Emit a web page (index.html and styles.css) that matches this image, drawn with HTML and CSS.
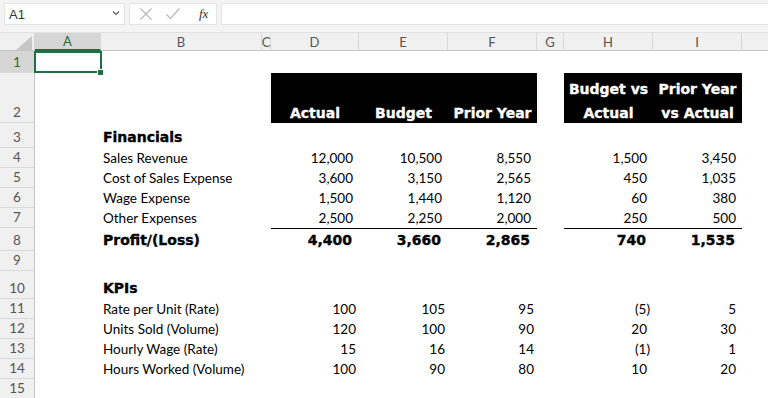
FILE: index.html
```html
<!DOCTYPE html>
<html>
<head>
<meta charset="utf-8">
<link rel="stylesheet" href="styles.css">
</head>
<body>
<div class="toolbar">
  <div class="namebox">
    <span class="nb-text">A1</span>
    <svg class="chev" width="8" height="6" viewBox="0 0 8 6"><path d="M1 1.5 L4 4.5 L7 1.5" fill="none" stroke="#555" stroke-width="1.1"/></svg>
  </div>
  <div class="fxbox">
    <svg class="ico" width="14" height="14" viewBox="0 0 14 14"><path d="M1.5 1.5 L12.5 12.5 M12.5 1.5 L1.5 12.5" stroke="#b9b9b9" stroke-width="1.2" fill="none"/></svg>
    <svg class="ico" width="16" height="14" viewBox="0 0 16 14"><path d="M1.5 7.5 L5.5 11.5 L14.5 1.5" stroke="#b9b9b9" stroke-width="1.2" fill="none"/></svg>
    <span class="fx">fx</span>
  </div>
  <div class="formula"></div>
</div>

<div class="sheet">
  <div class="row hdr">
    <div class="corner"><svg width="16" height="14" viewBox="0 0 16 14"><path d="M16 0 L16 14 L0 14 Z" fill="#c6c6c6"/></svg></div>
    <div class="ch active">A</div><div class="ch">B</div><div class="ch">C</div><div class="ch">D</div><div class="ch">E</div><div class="ch">F</div><div class="ch">G</div><div class="ch">H</div><div class="ch">I</div><div class="ch last"></div>
  </div>

  <div class="row h22">
    <div class="rh active">1</div>
    <div class="c sel-cell"><div class="sel"></div><div class="handle"></div></div><div class="c"></div><div class="c"></div><div class="c"></div><div class="c"></div><div class="c"></div><div class="c"></div><div class="c"></div><div class="c"></div><div class="c"></div>
  </div>

  <div class="row h50">
    <div class="rh">2</div>
    <div class="c"></div><div class="c"></div><div class="c"></div>
    <div class="c hd"><span>Actual</span></div>
    <div class="c hd"><span>Budget</span></div>
    <div class="c hd"><span>Prior Year</span></div>
    <div class="c"></div>
    <div class="c hd"><span>Budget vs Actual</span></div>
    <div class="c hd"><span>Prior Year vs Actual</span></div>
    <div class="c"></div>
  </div>

  <div class="row h25">
    <div class="rh">3</div>
    <div class="c"></div><div class="c lbl bold">Financials</div><div class="c"></div><div class="c"></div><div class="c"></div><div class="c"></div><div class="c"></div><div class="c"></div><div class="c"></div><div class="c"></div>
  </div>

  <div class="row h20">
    <div class="rh">4</div>
    <div class="c"></div><div class="c lbl">Sales Revenue</div><div class="c"></div>
    <div class="c num">12,000</div><div class="c num">10,500</div><div class="c num">8,550</div><div class="c"></div><div class="c num">1,500</div><div class="c num">3,450</div><div class="c"></div>
  </div>
  <div class="row h20">
    <div class="rh">5</div>
    <div class="c"></div><div class="c lbl">Cost of Sales Expense</div><div class="c"></div>
    <div class="c num">3,600</div><div class="c num">3,150</div><div class="c num">2,565</div><div class="c"></div><div class="c num">450</div><div class="c num">1,035</div><div class="c"></div>
  </div>
  <div class="row h20">
    <div class="rh">6</div>
    <div class="c"></div><div class="c lbl">Wage Expense</div><div class="c"></div>
    <div class="c num">1,500</div><div class="c num">1,440</div><div class="c num">1,120</div><div class="c"></div><div class="c num">60</div><div class="c num">380</div><div class="c"></div>
  </div>
  <div class="row h20">
    <div class="rh">7</div>
    <div class="c"></div><div class="c lbl">Other Expenses</div><div class="c"></div>
    <div class="c num">2,500</div><div class="c num">2,250</div><div class="c num">2,000</div><div class="c"></div><div class="c num">250</div><div class="c num">500</div><div class="c"></div>
  </div>

  <div class="row h23">
    <div class="rh">8</div>
    <div class="c"></div><div class="c lbl bold">Profit/(Loss)</div><div class="c"></div>
    <div class="c num total">4,400</div><div class="c num total">3,660</div><div class="c num total">2,865</div><div class="c"></div><div class="c num total">740</div><div class="c num total">1,535</div><div class="c"></div>
  </div>

  <div class="row h20">
    <div class="rh">9</div>
    <div class="c"></div><div class="c"></div><div class="c"></div><div class="c"></div><div class="c"></div><div class="c"></div><div class="c"></div><div class="c"></div><div class="c"></div><div class="c"></div>
  </div>

  <div class="row h28">
    <div class="rh">10</div>
    <div class="c"></div><div class="c lbl bold">KPIs</div><div class="c"></div><div class="c"></div><div class="c"></div><div class="c"></div><div class="c"></div><div class="c"></div><div class="c"></div><div class="c"></div>
  </div>

  <div class="row h20">
    <div class="rh">11</div>
    <div class="c"></div><div class="c lbl">Rate per Unit (Rate)</div><div class="c"></div>
    <div class="c num kpi">100</div><div class="c num kpi">105</div><div class="c num kpi">95</div><div class="c"></div><div class="c num neg">(5)</div><div class="c num">5</div><div class="c"></div>
  </div>
  <div class="row h20">
    <div class="rh">12</div>
    <div class="c"></div><div class="c lbl">Units Sold (Volume)</div><div class="c"></div>
    <div class="c num kpi">120</div><div class="c num kpi">100</div><div class="c num kpi">90</div><div class="c"></div><div class="c num">20</div><div class="c num">30</div><div class="c"></div>
  </div>
  <div class="row h20">
    <div class="rh">13</div>
    <div class="c"></div><div class="c lbl">Hourly Wage (Rate)</div><div class="c"></div>
    <div class="c num kpi">15</div><div class="c num kpi">16</div><div class="c num kpi">14</div><div class="c"></div><div class="c num neg">(1)</div><div class="c num">1</div><div class="c"></div>
  </div>
  <div class="row h20">
    <div class="rh">14</div>
    <div class="c"></div><div class="c lbl">Hours Worked (Volume)</div><div class="c"></div>
    <div class="c num kpi">100</div><div class="c num kpi">90</div><div class="c num kpi">80</div><div class="c"></div><div class="c num">10</div><div class="c num">20</div><div class="c"></div>
  </div>
  <div class="row h20">
    <div class="rh">15</div>
    <div class="c"></div><div class="c"></div><div class="c"></div><div class="c"></div><div class="c"></div><div class="c"></div><div class="c"></div><div class="c"></div><div class="c"></div><div class="c"></div>
  </div>
</div>
</body>
</html>
```

FILE: styles.css
```css
* { box-sizing: border-box; }
html, body { margin: 0; padding: 0; background: #ffffff; overflow: hidden; }
body { width: 768px; height: 398px; font-family: Lato, "Open Sans", sans-serif; color: #000; }

.toolbar {
  height: 33px;
  background: #f4f4f4;
  display: flex;
  align-items: flex-start;
  padding: 3px 0 0 4px;
  gap: 4px;
  border-bottom: 1px solid #e2e2e2;
}
.namebox {
  width: 121px; height: 22px;
  background: #fff;
  border: 1px solid #e3e3e3;
  display: flex; align-items: center; justify-content: space-between;
  padding: 0 4px 0 4px;
}
.nb-text { font-family: "Liberation Sans", Arial, sans-serif; font-size: 13px; color: #333; }
.chev { margin-top: -2px; }
.fxbox {
  width: 88px; height: 22px;
  background: #fff;
  border: 1px solid #e3e3e3;
  display: flex; align-items: center;
  padding-left: 9px; gap: 12px;
}
.fx { font-family: "Liberation Serif", serif; font-style: italic; font-size: 13px; color: #333; margin-left: 6px; }
.formula { flex: 1; height: 22px; background: #fff; border: 1px solid #e3e3e3; border-right: none; }

.sheet { display: flex; flex-direction: column; }
.row {
  display: grid;
  grid-template-columns: 35px 66px 161px 9px 88px 89px 89px 27px 89px 89px 1fr;
}
.h22 { height: 22px; }
.h50 { height: 50px; }
.h25 { height: 25px; }
.h20 { height: 20px; }
.h23 { height: 23px; }
.h28 { height: 28px; }

.hdr { height: 18px; background: #f0f0f0; border-bottom: 1px solid #c4c4c4; }
.corner { position: relative; border-right: 1px solid #d4d4d4; display: flex; justify-content: flex-end; align-items: flex-end; padding: 0 2px 1px 0; }
.ch {
  border-right: 1px solid #d8d8d8;
  font-family: Lato, sans-serif; font-size: 13px; color: #555;
  display: flex; align-items: center; justify-content: center;
}
.ch.last { border-right: none; }
.ch.active { background: #d6d6d6; color: #1e6e42; border-bottom: 2px solid #1e6e42; }

.rh {
  background: #f0f0f0;
  border-right: 1px solid #c4c4c4;
  border-bottom: 1px solid #dadada;
  font-family: Lato, sans-serif; font-size: 13.5px; color: #555;
  display: flex; align-items: flex-end; justify-content: center;
  padding-bottom: 2px;
}
.rh.active { background: #d6d6d6; color: #1e6e42; }

.c {
  display: flex; align-items: flex-end;
  font-size: 13.5px; line-height: 17px;
  padding-bottom: 1px;
  white-space: nowrap;
}
.lbl { padding-left: 2px; }
.bold {
  font-family: "DejaVu Sans", sans-serif; font-weight: bold; font-size: 14px;
  padding-bottom: 2px;
  -webkit-text-stroke: 0.35px #000;
}
.num { justify-content: flex-end; padding-right: 6px; }
.num.kpi { padding-right: 3px; }
.num.neg { padding-right: 3px; }
.num.total {
  font-family: "DejaVu Sans", sans-serif; font-weight: bold; font-size: 14px;
  padding-right: 7px; padding-bottom: 2px;
  border-top: 1px solid #000;
  -webkit-text-stroke: 0.35px #000;
}
.hd {
  background: #000; color: #fff;
  justify-content: center;
  text-align: center;
  white-space: normal;
  font-family: "DejaVu Sans", sans-serif; font-weight: bold; font-size: 14px;
  line-height: 24px;
  padding: 0 2px 0 2px;
  -webkit-text-stroke: 0.35px #fff;
}
.hd span { display: block; margin-bottom: -2px; }

.sel-cell { position: relative; }
.sel { position: absolute; left: -1px; top: 0; right: -1px; bottom: 0; border: 2px solid #1e7145; }
.handle { position: absolute; right: -3px; bottom: -3px; width: 5px; height: 5px; background: #1e7145; border: 1px solid #fff; box-sizing: content-box; }
```
